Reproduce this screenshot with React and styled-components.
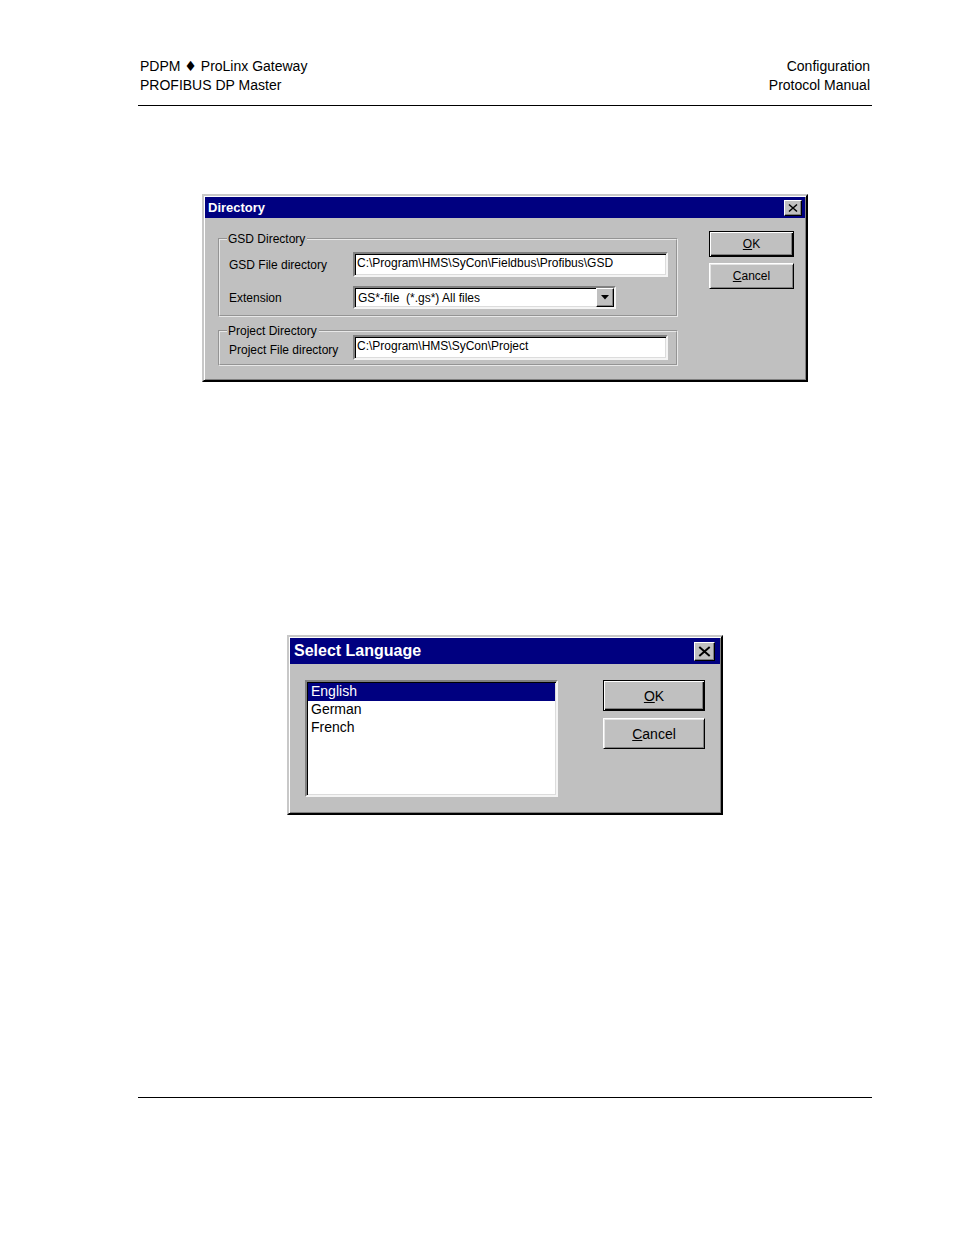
import React from 'react';
import styled, { createGlobalStyle, css } from 'styled-components';

const Global = createGlobalStyle`
  * { box-sizing: border-box; }
  body {
    margin: 0;
    background: #fff;
    color: #000;
    font-family: "Liberation Sans", Arial, sans-serif;
  }
`;

const raised = css`
  border: 1px solid;
  border-color: #fff #000 #000 #fff;
  box-shadow: inset -1px -1px 0 #808080;
`;

const sunken = css`
  border: 2px solid;
  border-color: #808080 #f4f4f4 #f4f4f4 #808080;
  box-shadow: inset 1px 1px 0 #000, inset -1px -1px 0 #dcdcdc;
`;

const Page = styled.div`
  min-height: 100vh;
  padding: 57px 82px 137px 138px;
  display: flex;
  flex-direction: column;
`;

const PageHeader = styled.header`
  display: flex;
  justify-content: space-between;
  padding: 0 2px 10px;
  border-bottom: 1px solid #000;
  font-size: 14px;
  line-height: 19px;
`;

const HeaderText = styled.p`
  margin: 0;
  text-align: ${(p) => p.$align || 'left'};
`;

const Diamond = styled.span`
  font-family: "DejaVu Sans", sans-serif;
  line-height: 1;
`;

const Content = styled.main`
  flex: 1;
  display: flex;
  flex-direction: column;
  align-items: center;
  gap: 253px;
  padding: 88px 0;
  border-bottom: 1px solid #000;
`;

const Dialog = styled.section`
  width: 100%;
  max-width: ${(p) => p.$width}px;
  padding: 1px;
  background: #c0c0c0;
  border: 2px solid;
  border-color: #c8c8c8 #000 #000 #c8c8c8;
  box-shadow: inset 1px 1px 0 #fff, inset -1px -1px 0 #808080;
`;

const TitleBar = styled.header`
  display: flex;
  align-items: center;
  justify-content: space-between;
  height: ${(p) => (p.$large ? 26 : 21)}px;
  padding: 0 ${(p) => (p.$large ? 5 : 3)}px 0 ${(p) => (p.$large ? 4 : 3)}px;
  background: #000080;
  color: #fff;
`;

const Title = styled.h2`
  margin: 0;
  font-size: ${(p) => (p.$large ? 16 : 13)}px;
  font-weight: 700;
`;

const CloseButton = styled.button`
  ${raised}
  display: grid;
  place-items: center;
  width: ${(p) => (p.$large ? 21 : 18)}px;
  height: ${(p) => (p.$large ? 19 : 16)}px;
  padding: 0;
  background: #c0c0c0;
`;

const Body = styled.form`
  display: flex;
  justify-content: space-between;
  align-items: flex-start;
  padding: ${(p) => (p.$large ? '16px 15px 15px 15px' : '13px 11px 13px 13px')};
`;

const Groups = styled.div`
  display: flex;
  flex-direction: column;
  gap: 6px;
  flex: 0 1 460px;
`;

const Legend = styled.legend`
  padding: 0 2px 0 1px;
  margin-left: -2px;
  line-height: 16px;
`;

const Row = styled.div`
  display: grid;
  grid-template-columns: 124px 1fr;
  align-items: center;
`;

const Group = styled.fieldset`
  margin: 0;
  min-width: 0;
  padding: ${(p) => (p.$compact ? '0 8px 4px 9px' : '5px 8px 6px 9px')};
  border: 2px groove #e8e8e8;
  font-size: 12px;
  line-height: 20px;
  display: flex;
  flex-direction: column;
  gap: 9px;

  ${Row} {
    margin-top: ${(p) => (p.$compact ? -4 : 0)}px;
    align-items: ${(p) => (p.$compact ? 'end' : 'center')};
  }
`;

const TextBox = styled.input`
  ${sunken}
  width: 100%;
  height: 25px;
  padding: 0 2px 3px;
  background: #fff;
  font: 12px "Liberation Sans", Arial, sans-serif;
`;

const ComboBox = styled.div`
  position: relative;
  width: 263px;
  max-width: 100%;
`;

const ComboSelect = styled.select`
  ${sunken}
  display: block;
  appearance: none;
  width: 100%;
  height: 23px;
  padding: 1px 22px 0 3px;
  border-radius: 0;
  background: #fff;
  color: #000;
  font: 12px "Liberation Sans", Arial, sans-serif;
  white-space: pre;
`;

const ComboArrow = styled.span`
  ${raised}
  position: absolute;
  top: 2px;
  right: 2px;
  bottom: 2px;
  width: 18px;
  display: grid;
  place-items: center;
  background: #c0c0c0;
  pointer-events: none;
`;

const Buttons = styled.div`
  display: flex;
  flex-direction: column;
  gap: ${(p) => (p.$large ? 7 : 6)}px;
  width: ${(p) => (p.$large ? 102 : 85)}px;
`;

const PushButton = styled.button`
  height: ${(p) => (p.$large ? 31 : 26)}px;
  padding: 0;
  background: #c0c0c0;
  color: #000;
  font: ${(p) => (p.$large ? 14 : 12)}px "Liberation Sans", Arial, sans-serif;
  border: 1px solid;
  border-color: ${(p) => (p.$primary ? '#000' : '#fff #000 #000 #fff')};
  box-shadow: ${(p) =>
    p.$primary
      ? 'inset 1px 1px 0 #fff, inset -1px -1px 0 #000, inset -2px -2px 0 #808080'
      : 'inset 1px 1px 0 #e4e4e4, inset -1px -1px 0 #808080'};
`;

const ListBox = styled.select`
  ${sunken}
  display: block;
  flex: 0 1 253px;
  height: 117px;
  padding: 1px;
  border-radius: 0;
  background: #fff;
  color: #000;
  font: 14px "Liberation Sans", Arial, sans-serif;
  overflow: hidden;
  outline: none;
`;

const ListItem = styled.option`
  height: 18px;
  min-height: 18px;
  padding: 0 3px;
  line-height: 18px;
  color: #000;

  &:checked {
    background: #000080 linear-gradient(#000080, #000080);
    color: #fff;
    -webkit-text-fill-color: #fff;
  }
`;

function CloseIcon({ size }) {
  return (
    <svg width={size} height={size} viewBox="0 0 10 10" aria-hidden="true">
      <path d="M1 1.5 9 8.5M9 1.5 1 8.5" stroke="#000" strokeWidth="1.5" fill="none" />
    </svg>
  );
}

function DialogFrame({ title, width, large, children }) {
  return (
    <Dialog $width={width} role="dialog" aria-label={title}>
      <TitleBar $large={large}>
        <Title $large={large}>{title}</Title>
        <CloseButton type="button" aria-label="Close" $large={large}>
          <CloseIcon size={large ? 13 : 10} />
        </CloseButton>
      </TitleBar>
      <Body $large={large} onSubmit={(e) => e.preventDefault()}>
        {children}
        <Buttons $large={large}>
          <PushButton type="submit" $primary $large={large}><u>O</u>K</PushButton>
          <PushButton type="button" $large={large}><u>C</u>ancel</PushButton>
        </Buttons>
      </Body>
    </Dialog>
  );
}

export default function App() {
  return (
    <>
      <Global />
      <Page>
        <PageHeader>
          <HeaderText>PDPM <Diamond>♦</Diamond> ProLinx Gateway<br />PROFIBUS DP Master</HeaderText>
          <HeaderText $align="right">Configuration<br />Protocol Manual</HeaderText>
        </PageHeader>
        <Content>
          <DialogFrame title="Directory" width={606}>
            <Groups>
              <Group>
                <Legend>GSD Directory</Legend>
                <Row>
                  <label htmlFor="gsd-dir">GSD File directory</label>
                  <TextBox id="gsd-dir" defaultValue="C:\Program\HMS\SyCon\Fieldbus\Profibus\GSD" />
                </Row>
                <Row>
                  <label htmlFor="extension">Extension</label>
                  <ComboBox>
                    <ComboSelect id="extension">
                      <option>{'GS*-file\u00a0 (*.gs*) All files'}</option>
                    </ComboSelect>
                    <ComboArrow>
                      <svg width="8" height="5" viewBox="0 0 8 5" aria-hidden="true">
                        <path d="M0 0H8L4 4.5Z" fill="#000" />
                      </svg>
                    </ComboArrow>
                  </ComboBox>
                </Row>
              </Group>
              <Group $compact>
                <Legend>Project Directory</Legend>
                <Row>
                  <label htmlFor="project-dir">Project File directory</label>
                  <TextBox id="project-dir" defaultValue="C:\Program\HMS\SyCon\Project" />
                </Row>
              </Group>
            </Groups>
          </DialogFrame>
          <DialogFrame title="Select Language" width={436} large>
            <ListBox size={6} defaultValue="English" aria-label="Language">
              <ListItem>English</ListItem>
              <ListItem>German</ListItem>
              <ListItem>French</ListItem>
            </ListBox>
          </DialogFrame>
        </Content>
      </Page>
    </>
  );
}
